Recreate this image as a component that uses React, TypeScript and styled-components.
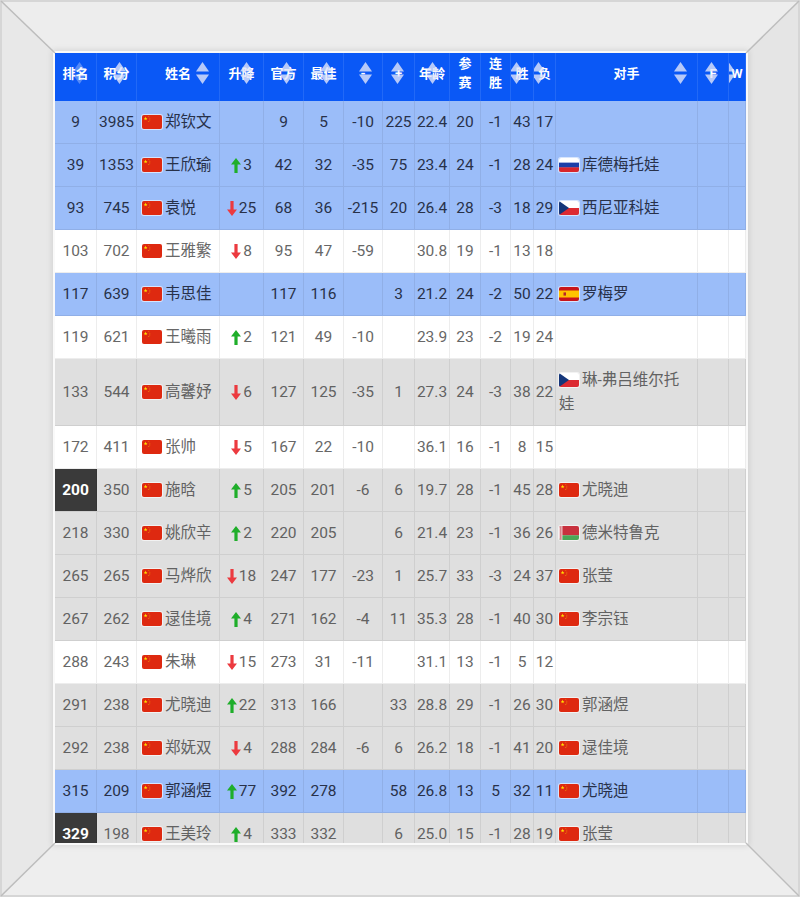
import React from "react";
import styled, { createGlobalStyle, css } from "styled-components";

const Global = createGlobalStyle`
  html, body { margin: 0; padding: 0; background: #ffffff; }
  body { font-family: Roboto, "Noto Sans CJK SC", sans-serif; }
`;

const COLS = "42px 40px 83px 44px 40px 40px 39px 32px 35px 31px 30px 23px 22px 142px 31px 17px";

type Tone = "blue" | "white" | "gray";
type Flag = "cn" | "ru" | "cz" | "es" | "by";

interface Row {
  rank: number;
  dark?: boolean;
  pts: string;
  name: string;
  chg?: { dir: "up" | "down"; n: number };
  off: string;
  best: string;
  minus: string;
  plus: string;
  age: string;
  played: string;
  streak: string;
  w: string;
  l: string;
  opp?: { flag: Flag; name: string };
  tone: Tone;
}

const rows: Row[] = [
  { rank: 9, pts: "3985", name: "郑钦文", off: "9", best: "5", minus: "-10", plus: "225", age: "22.4", played: "20", streak: "-1", w: "43", l: "17", tone: "blue" },
  { rank: 39, pts: "1353", name: "王欣瑜", chg: { dir: "up", n: 3 }, off: "42", best: "32", minus: "-35", plus: "75", age: "23.4", played: "24", streak: "-1", w: "28", l: "24", opp: { flag: "ru", name: "库德梅托娃" }, tone: "blue" },
  { rank: 93, pts: "745", name: "袁悦", chg: { dir: "down", n: 25 }, off: "68", best: "36", minus: "-215", plus: "20", age: "26.4", played: "28", streak: "-3", w: "18", l: "29", opp: { flag: "cz", name: "西尼亚科娃" }, tone: "blue" },
  { rank: 103, pts: "702", name: "王雅繁", chg: { dir: "down", n: 8 }, off: "95", best: "47", minus: "-59", plus: "", age: "30.8", played: "19", streak: "-1", w: "13", l: "18", tone: "white" },
  { rank: 117, pts: "639", name: "韦思佳", off: "117", best: "116", minus: "", plus: "3", age: "21.2", played: "24", streak: "-2", w: "50", l: "22", opp: { flag: "es", name: "罗梅罗" }, tone: "blue" },
  { rank: 119, pts: "621", name: "王曦雨", chg: { dir: "up", n: 2 }, off: "121", best: "49", minus: "-10", plus: "", age: "23.9", played: "23", streak: "-2", w: "19", l: "24", tone: "white" },
  { rank: 133, pts: "544", name: "高馨妤", chg: { dir: "down", n: 6 }, off: "127", best: "125", minus: "-35", plus: "1", age: "27.3", played: "24", streak: "-3", w: "38", l: "22", opp: { flag: "cz", name: "琳-弗吕维尔托娃" }, tone: "gray" },
  { rank: 172, pts: "411", name: "张帅", chg: { dir: "down", n: 5 }, off: "167", best: "22", minus: "-10", plus: "", age: "36.1", played: "16", streak: "-1", w: "8", l: "15", tone: "white" },
  { rank: 200, dark: true, pts: "350", name: "施晗", chg: { dir: "up", n: 5 }, off: "205", best: "201", minus: "-6", plus: "6", age: "19.7", played: "28", streak: "-1", w: "45", l: "28", opp: { flag: "cn", name: "尤晓迪" }, tone: "gray" },
  { rank: 218, pts: "330", name: "姚欣辛", chg: { dir: "up", n: 2 }, off: "220", best: "205", minus: "", plus: "6", age: "21.4", played: "23", streak: "-1", w: "36", l: "26", opp: { flag: "by", name: "德米特鲁克" }, tone: "gray" },
  { rank: 265, pts: "265", name: "马烨欣", chg: { dir: "down", n: 18 }, off: "247", best: "177", minus: "-23", plus: "1", age: "25.7", played: "33", streak: "-3", w: "24", l: "37", opp: { flag: "cn", name: "张莹" }, tone: "gray" },
  { rank: 267, pts: "262", name: "逯佳境", chg: { dir: "up", n: 4 }, off: "271", best: "162", minus: "-4", plus: "11", age: "35.3", played: "28", streak: "-1", w: "40", l: "30", opp: { flag: "cn", name: "李宗钰" }, tone: "gray" },
  { rank: 288, pts: "243", name: "朱琳", chg: { dir: "down", n: 15 }, off: "273", best: "31", minus: "-11", plus: "", age: "31.1", played: "13", streak: "-1", w: "5", l: "12", tone: "white" },
  { rank: 291, pts: "238", name: "尤晓迪", chg: { dir: "up", n: 22 }, off: "313", best: "166", minus: "", plus: "33", age: "28.8", played: "29", streak: "-1", w: "26", l: "30", opp: { flag: "cn", name: "郭涵煜" }, tone: "gray" },
  { rank: 292, pts: "238", name: "郑妩双", chg: { dir: "down", n: 4 }, off: "288", best: "284", minus: "-6", plus: "6", age: "26.2", played: "18", streak: "-1", w: "41", l: "20", opp: { flag: "cn", name: "逯佳境" }, tone: "gray" },
  { rank: 315, pts: "209", name: "郭涵煜", chg: { dir: "up", n: 77 }, off: "392", best: "278", minus: "", plus: "58", age: "26.8", played: "13", streak: "5", w: "32", l: "11", opp: { flag: "cn", name: "尤晓迪" }, tone: "blue" },
  { rank: 329, dark: true, pts: "198", name: "王美玲", chg: { dir: "up", n: 4 }, off: "333", best: "332", minus: "", plus: "6", age: "25.0", played: "15", streak: "-1", w: "28", l: "19", opp: { flag: "cn", name: "张莹" }, tone: "gray" },
];

const headers: { label: string; sort?: "full" | "faint" }[] = [
  { label: "排名", sort: "faint" },
  { label: "积分", sort: "full" },
  { label: "姓名", sort: "full" },
  { label: "升降", sort: "full" },
  { label: "官方", sort: "full" },
  { label: "最佳", sort: "full" },
  { label: "-", sort: "full" },
  { label: "+", sort: "full" },
  { label: "年龄", sort: "full" },
  { label: "参赛" },
  { label: "连胜" },
  { label: "胜", sort: "full" },
  { label: "负", sort: "full" },
  { label: "对手", sort: "full" },
  { label: "F", sort: "full" },
  { label: "W", sort: "full" },
];

/* ---------- frame ---------- */

const Outer = styled.div`
  position: relative;
  width: 800px;
  height: 897px;
  box-sizing: border-box;
  border: 2px solid #d6d6d6;
  background: #e9e9e9;
`;

const Frame = styled.div`
  width: 100%;
  height: 100%;
  box-sizing: border-box;
  border-style: solid;
  border-width: 51px 52px 52px 53px;
  border-color: #ededed #e5e5e5 #eeeeee #e8e8e8;
`;

const Bevel = styled.svg`
  position: absolute;
  left: -2px;
  top: -2px;
  width: 800px;
  height: 897px;
  pointer-events: none;
`;

const Viewport = styled.div`
  width: 691px;
  height: 790px;
  overflow: hidden;
  background: #ffffff;
  box-shadow: 0 0 0 2px #f9f9f9, 0 0 6px 3px rgba(0, 0, 0, 0.1);
`;

/* ---------- header ---------- */

const HeadRow = styled.div`
  display: grid;
  grid-template-columns: ${COLS};
  height: 48px;
  background: #0a58f6;
`;

const HeadCell = styled.div`
  position: relative;
  box-sizing: border-box;
  display: flex;
  align-items: center;
  justify-content: center;
  text-align: center;
  padding: 0 4px 8px;
  border-right: 1px solid rgba(255, 255, 255, 0.1);
  color: #ffffff;
  font-weight: 700;
  font-size: 13px;
  line-height: 19px;
  overflow: hidden;
  white-space: normal;
`;

const SortIcon = styled.svg<{ $faint?: boolean }>`
  position: absolute;
  right: 10px;
  top: 9px;
  width: 13px;
  height: 22px;
  opacity: ${(p) => (p.$faint ? 0.35 : 0.8)};
`;

/* ---------- body ---------- */

const toneStyles: Record<Tone, ReturnType<typeof css>> = {
  blue: css`
    background: #9bbdf9;
    color: #283149;
  `,
  white: css`
    background: #ffffff;
    color: #676767;
  `,
  gray: css`
    background: #dfdfdf;
    color: #626262;
  `,
};

const BodyRow = styled.div<{ $tone: Tone }>`
  display: grid;
  grid-template-columns: ${COLS};
  box-sizing: border-box;
  border-bottom: 1px solid rgba(0, 0, 0, 0.07);
  ${(p) => toneStyles[p.$tone]}
`;

const Cell = styled.div<{ $align?: "left" | "center"; $dark?: boolean }>`
  box-sizing: border-box;
  display: flex;
  align-items: center;
  justify-content: ${(p) => (p.$align === "left" ? "flex-start" : "center")};
  padding: 9px ${(p) => (p.$align === "left" ? "2px 9px 5px" : "0")};
  border-right: 1px solid rgba(0, 0, 0, 0.07);
  font-size: 15.5px;
  line-height: 24px;
  white-space: nowrap;
  ${(p) =>
    p.$dark &&
    css`
      background: #3a3a3a;
      color: #ffffff;
      font-weight: 700;
    `}
`;

const OppCell = styled.div`
  box-sizing: border-box;
  display: flex;
  align-items: center;
  padding: 9px 10px 9px 3px;
  border-right: 1px solid rgba(0, 0, 0, 0.07);
  font-size: 15.5px;
  line-height: 24px;
`;

const OppText = styled.div`
  text-align: left;
`;

const FlagBox = styled.svg`
  display: inline-block;
  width: 20px;
  height: 14px;
  margin-right: 3px;
  vertical-align: -2px;
  border-radius: 2px;
  box-shadow: 0 0 0 1px rgba(255, 255, 255, 0.6);
  flex: none;
`;

const Change = styled.span`
  display: inline-flex;
  align-items: center;
`;

const ArrowSvg = styled.svg`
  width: 10px;
  height: 15px;
  margin-right: 2px;
`;

/* ---------- drawings ---------- */

function Sort({ faint }: { faint?: boolean }) {
  return (
    <SortIcon $faint={faint} viewBox="0 0 13 22">
      <polygon points="6.5,0 13,9.5 0,9.5" fill="#e2e6fa" />
      <polygon points="0,12.5 13,12.5 6.5,22" fill="#e2e6fa" />
    </SortIcon>
  );
}

function Arrow({ dir }: { dir: "up" | "down" }) {
  const up = "5,0 10,6.5 6.6,6.5 6.6,15 3.4,15 3.4,6.5 0,6.5";
  const down = "5,15 10,8.5 6.6,8.5 6.6,0 3.4,0 3.4,8.5 0,8.5";
  return (
    <ArrowSvg viewBox="0 0 10 15">
      <polygon points={dir === "up" ? up : down} fill={dir === "up" ? "#1fae2a" : "#ec3a3f"} />
    </ArrowSvg>
  );
}

function Star({ cx, cy, r }: { cx: number; cy: number; r: number }) {
  const pts: string[] = [];
  for (let i = 0; i < 10; i++) {
    const rad = i % 2 === 0 ? r : r * 0.42;
    const a = -Math.PI / 2 + (i * Math.PI) / 5;
    pts.push(`${(cx + rad * Math.cos(a)).toFixed(2)},${(cy + rad * Math.sin(a)).toFixed(2)}`);
  }
  return <polygon points={pts.join(" ")} fill="#ffde00" />;
}

function FlagIcon({ flag }: { flag: Flag }) {
  return (
    <FlagBox viewBox="0 0 20 14" preserveAspectRatio="none">
      {flag === "cn" && (
        <>
          <rect width="20" height="14" fill="#de2910" />
          <Star cx={3.6} cy={3.6} r={2} />
          <Star cx={6.8} cy={1.6} r={0.6} />
          <Star cx={7.8} cy={3.1} r={0.6} />
          <Star cx={7.8} cy={5} r={0.6} />
          <Star cx={6.8} cy={6.5} r={0.6} />
        </>
      )}
      {flag === "ru" && (
        <>
          <rect width="20" height="4.8" fill="#ffffff" />
          <rect y="4.67" width="20" height="4.8" fill="#1c3fa8" />
          <rect y="9.33" width="20" height="4.67" fill="#d8262c" />
        </>
      )}
      {flag === "cz" && (
        <>
          <rect width="20" height="7" fill="#ffffff" />
          <rect y="7" width="20" height="7" fill="#dc2a32" />
          <polygon points="0,0 10,7 0,14" fill="#14367a" />
        </>
      )}
      {flag === "es" && (
        <>
          <rect width="20" height="14" fill="#c8151b" />
          <rect y="3.5" width="20" height="7" fill="#ffc400" />
          <rect x="4.5" y="5.4" width="2.5" height="3.2" fill="#b8262a" />
        </>
      )}
      {flag === "by" && (
        <>
          <rect width="20" height="9.3" fill="#c8313e" />
          <rect y="9.3" width="20" height="4.7" fill="#4aa657" />
          <rect width="3.4" height="14" fill="#f5e6e6" />
          <rect x="0.8" width="1.8" height="14" fill="#d8838a" />
        </>
      )}
    </FlagBox>
  );
}

export default function App() {
  return (
    <>
      <Global />
      <Outer>
        <Frame>
          <Viewport>
            <HeadRow>
              {headers.map((h, i) => (
                <HeadCell key={i}>
                  {h.label}
                  {h.sort && <Sort faint={h.sort === "faint"} />}
                </HeadCell>
              ))}
            </HeadRow>
            {rows.map((r) => (
              <BodyRow key={r.rank} $tone={r.tone}>
                <Cell $dark={r.dark}>{r.rank}</Cell>
                <Cell>{r.pts}</Cell>
                <Cell $align="left">
                  <FlagIcon flag="cn" />
                  {r.name}
                </Cell>
                <Cell>
                  {r.chg && (
                    <Change>
                      <Arrow dir={r.chg.dir} />
                      {r.chg.n}
                    </Change>
                  )}
                </Cell>
                <Cell>{r.off}</Cell>
                <Cell>{r.best}</Cell>
                <Cell>{r.minus}</Cell>
                <Cell>{r.plus}</Cell>
                <Cell>{r.age}</Cell>
                <Cell>{r.played}</Cell>
                <Cell>{r.streak}</Cell>
                <Cell>{r.w}</Cell>
                <Cell>{r.l}</Cell>
                <OppCell>
                  {r.opp && (
                    <OppText>
                      <FlagIcon flag={r.opp.flag} />
                      {r.opp.name}
                    </OppText>
                  )}
                </OppCell>
                <Cell />
                <Cell />
              </BodyRow>
            ))}
          </Viewport>
        </Frame>
        <Bevel viewBox="0 0 800 897">
          <g stroke="#bdbdbd" strokeWidth="1.5">
            <line x1="1" y1="1" x2="55" y2="53" />
            <line x1="799" y1="1" x2="746" y2="53" />
            <line x1="1" y1="896" x2="55" y2="843" />
            <line x1="799" y1="896" x2="746" y2="843" />
          </g>
        </Bevel>
      </Outer>
    </>
  );
}
